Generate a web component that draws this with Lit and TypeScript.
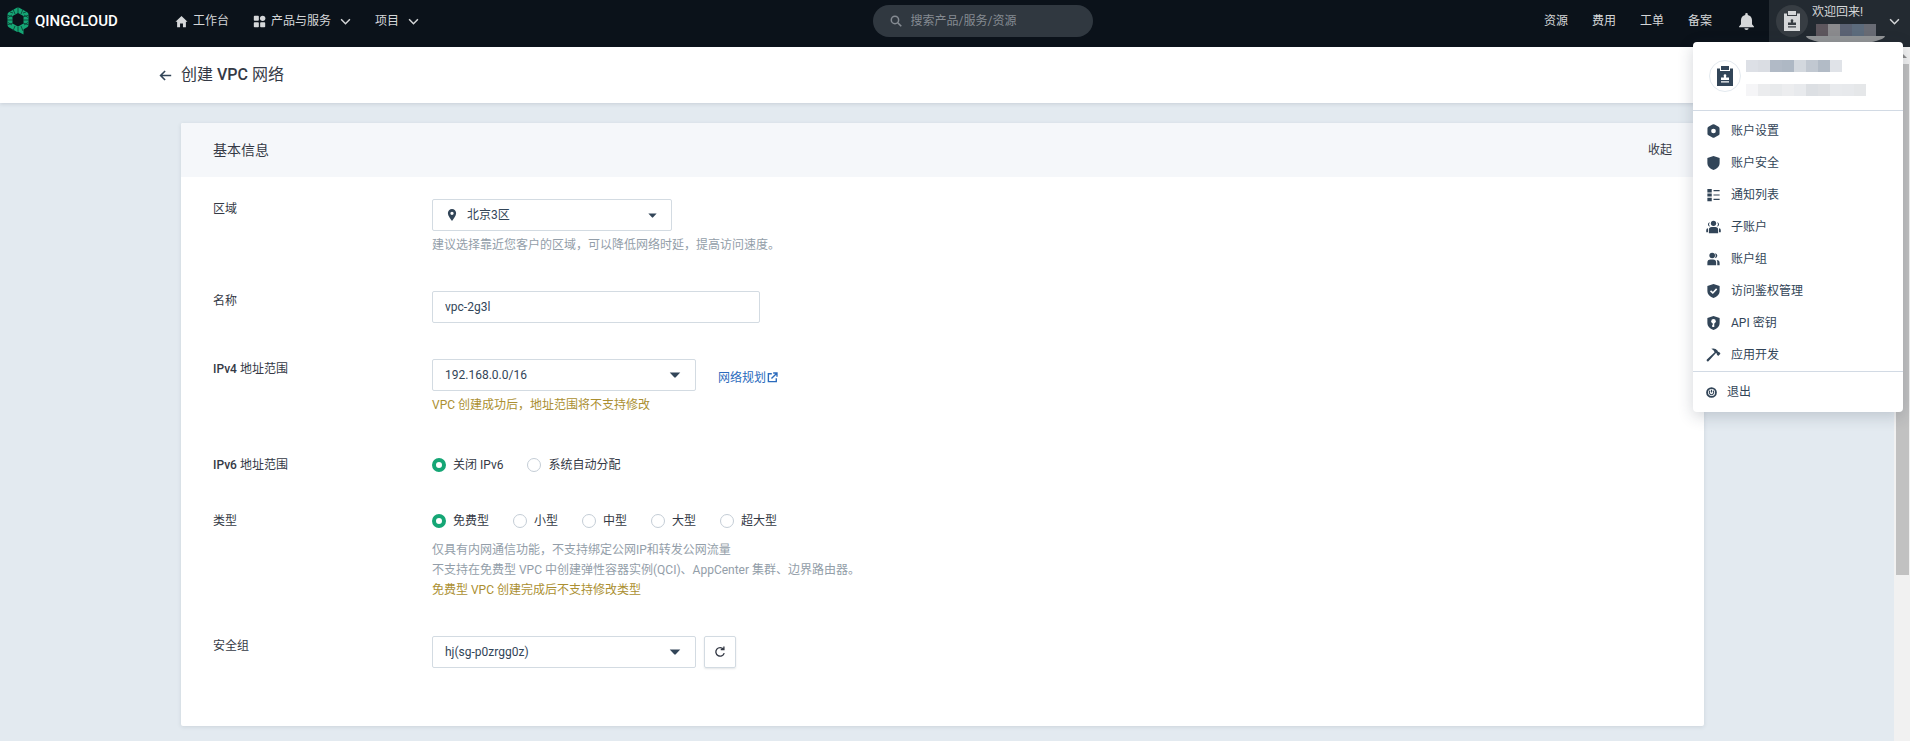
import { LitElement, html, svg, css, SVGTemplateResult } from "lit";
import { customElement, property, state } from "lit/decorators.js";

const icons: Record<string, SVGTemplateResult> = {
  home: svg`<path d="M8 1.2 15.4 8.2H13.4V15H9.8V10.6H6.2V15H2.6V8.2H.6Z"/>`,
  grid: svg`<rect x="1" y="1" width="6.2" height="6.2" rx="1"/><rect x="1" y="8.8" width="6.2" height="6.2" rx="1"/><rect x="8.8" y="8.8" width="6.2" height="6.2" rx="1"/><circle cx="11.9" cy="4.1" r="3.3"/>`,
  chevron: svg`<path d="M1.6 4.8 8 11.2 14.4 4.8" fill="none" stroke="currentColor" stroke-width="2.2"/>`,
  search: svg`<circle cx="6.6" cy="6.6" r="4.9" fill="none" stroke="currentColor" stroke-width="2"/><path d="M10.3 10.3 15 15" fill="none" stroke="currentColor" stroke-width="2.2"/>`,
  bell: svg`<path d="M8 0a1.2 1.2 0 0 1 1.2 1.3v.5C11.700 2.300 13.200 4.300 13.200 6.800V10.500L15 12.600V13.400H1V12.600L2.800 10.500V6.800C2.800 4.300 4.300 2.300 6.800 1.800V1.300A1.200 1.200 0 0 1 8 0ZM6 14.300H10A2 1.700 0 0 1 6 14.300Z"/>`,
  badge: svg`<path d="M0 2.500H3V5H13V2.500H16V20H0ZM4 0H12V4H4ZM7 8.500A1.900 1.900 0 0 1 9 8.500C9.800 9.500 8.900 10.600 9 11.500H12V14H4V11.500H7C7.100 10.600 6.200 9.500 7 8.500ZM4 15.200V16.400H12V15.200Z" fill-rule="evenodd"/>`,
  back: svg`<path d="M15 8H2M7.500 2.500 2 8 7.500 13.500" fill="none" stroke="currentColor" stroke-width="2"/>`,
  pin: svg`<path d="M8 0A5.500 5.500 0 0 1 13.500 5.700C13.500 9.500 10 13 8 16 6 13 2.500 9.500 2.500 5.700A5.500 5.500 0 0 1 8 0ZM8 3.500A2.200 2.200 0 1 0 8 7.900 2.200 2.200 0 0 0 8 3.500Z" fill-rule="evenodd"/>`,
  caret: svg`<path d="M2 5H14L8.900 10.700Q8 11.500 7.100 10.700Z"/>`,
  external: svg`<path d="M7 2.500H2V14H13.500V9M9 1.500H14.500V7M14.300 1.700 6.500 9.500" fill="none" stroke="currentColor" stroke-width="2"/>`,
  refresh: svg`<path d="M12.600 4.200A5.700 5.700 0 1 0 13.600 9.500M9 4.600H13.200V.6" fill="none" stroke="currentColor" stroke-width="1.800"/>`,
  settings: svg`<path d="M8 .3Q8.600.3 9.200.7L13.800 3.200Q14.900 3.800 14.900 5V11Q14.900 12.200 13.800 12.800L9.200 15.300Q8 16 6.800 15.300L2.200 12.800Q1.100 12.200 1.100 11V5Q1.100 3.800 2.200 3.200L6.800.7Q7.400.3 8 .3ZM8 5.300A2.700 2.700 0 1 0 8 10.700 2.700 2.700 0 0 0 8 5.300Z" fill-rule="evenodd"/>`,
  shield: svg`<path d="M8 0 15 2.300V8C15 12 11.500 14.800 8 16 4.500 14.800 1 12 1 8V2.300Z"/>`,
  list: svg`<path d="M1 1H6V5H1ZM1 6.200H6V9.800H1ZM1 11H6V15H1ZM8 2.200H15V3.600H8ZM8 7.300H15V8.700H8ZM8 12.400H15V13.800H8Z"/>`,
  team: svg`<circle cx="8" cy="3.800" r="3"/><path d="M2.700 15V11Q2.700 8 6 8H10Q13.300 8 13.300 11V15ZM1.700 9.500V14H-.3V11.500Q-.3 9.800 1.700 9.500ZM14.300 9.500V14H16.300V11.500Q16.300 9.800 14.300 9.500Z"/><path d="M4 2.500A3.500 3.500 0 0 0 4.300 7.500 2.300 2.300 0 1 1 4 2.500ZM12 2.500A3.500 3.500 0 0 1 11.700 7.500 2.300 2.300 0 1 0 12 2.500Z"/>`,
  group: svg`<circle cx="6.500" cy="4" r="3.200"/><path d="M1 15V12Q1 8.500 4.500 8.500H7.500Q11 8.500 11 12V15ZM9.500 1.500Q12.500 2 12.300 4.600 12 7 9.500 7.200 11.500 4.500 9.500 1.500ZM12.300 15V11.500Q12.300 10 11.500 9.200 15 9.300 15 12.500V15Z"/>`,
  check: svg`<path d="M8 0 15 2.300V8C15 12 11.500 14.800 8 16 4.500 14.800 1 12 1 8V2.300Z"/><path d="M4.600 7.800 7.200 10.200 11.600 5.600" fill="none" stroke="#fff" stroke-width="1.800"/>`,
  key: svg`<path d="M8 0 15 2.300V8C15 12 11.500 14.800 8 16 4.500 14.800 1 12 1 8V2.300Z"/><circle cx="8" cy="6" r="2.600" fill="#fff"/><path d="M7.100 8H8.900V12.500H7.100Z" fill="#fff"/><path d="M6.600 10.200H8V12.500H6.600Z" fill="#fff"/>`,
  hammer: svg`<path d="M5.500.8Q10-.3 12.500 2.800L13.300 4.600 14.300 4.200 16 6.600 13.300 9 11.800 7.500 11.800 6.200 10.800 5.800 2.200 15.200Q1 15.700.4 14.900-.2 14 .4 13.200L9.300 4.800Q8.500 2 5.500.8Z"/>`,
  power: svg`<circle cx="8" cy="8" r="6.500" fill="none" stroke="currentColor" stroke-width="2.600"/><path d="M6 5.500A3.200 3.200 0 1 0 10 5.500M8 4V8" fill="none" stroke="currentColor" stroke-width="1.600"/>`,
};

@customElement("app-icon")
class AppIcon extends LitElement {
  @property() name = "";
  static styles = css`
    :host { display: inline-flex; flex: none; width: 12px; height: 12px; }
    svg { width: 100%; height: 100%; fill: currentColor; overflow: visible; }
  `;
  render() {
    const box = this.name === "badge" ? "0 0 16 20" : "0 0 16 16";
    return html`<svg viewBox=${box} aria-hidden="true">${icons[this.name]}</svg>`;
  }
}

@customElement("app-logo")
class AppLogo extends LitElement {
  static styles = css`
    :host { display: flex; align-items: center; gap: 6px; }
    svg { width: 22px; height: 28px; }
    .word {
      color: #fff;
      font: 500 15px/28px Roboto, sans-serif;
    }
  `;
  render() {
    return html`
      <svg viewBox="0 0 22 28" aria-hidden="true">
        <path d="M11 3 19 7.500V18L11 22.500 3 18V7.500Z" fill="none" stroke="#15a675" stroke-width="5" stroke-linejoin="round"/>
        <path d="M10 21 16.500 20V27.500L10 24Z" fill="#15a675"/>
        <path d="M11 0V6M6 2 8 7M16 2 14 7M0 8 6 10M22 8 16 10M0 13H6M22 13H16M0 18 6 16M22 18 16 16M6 24 8 19M11 25V20M16 24 14 19M3 5 6 6M16 6 19 5M1 10.500 5 8M21 10.500 17 8M1 15.500 5 18M21 15.500 17 18" stroke="#0b3a31" stroke-width=".8"/>
      </svg>
      <span class="word">QINGCLOUD</span>
    `;
  }
}

/* Masked account text, shown as rows of plain blocks. */
@customElement("masked-text")
class MaskedText extends LitElement {
  @property({ attribute: false }) colors: string[] = [];
  static styles = css`
    :host { display: flex; height: 12px; }
    .cell { width: 12px; height: 12px; }
  `;
  render() {
    return html`${this.colors.map((c) => html`<span class="cell" style="background:${c}"></span>`)}`;
  }
}

const menuItems = [
  ["settings", "账户设置"],
  ["shield", "账户安全"],
  ["list", "通知列表"],
  ["team", "子账户"],
  ["group", "账户组"],
  ["check", "访问鉴权管理"],
  ["key", "API 密钥"],
  ["hammer", "应用开发"],
];

@customElement("account-menu")
class AccountMenu extends LitElement {
  static styles = css`
    :host {
      display: block;
      width: 210px;
      background: #fff;
      border-radius: 4px;
      box-shadow: 0 4px 16px rgba(36, 46, 66, 0.2);
      color: #324558;
      font-size: 12px;
      line-height: 20px;
    }
    .profile { display: flex; gap: 5px; padding: 18px 16px; border-bottom: 1px solid #d2dae4; }
    .avatar {
      display: flex; align-items: center; justify-content: center;
      box-sizing: border-box; width: 32px; height: 32px;
      border: 1px solid #e3e9ef; border-radius: 50%;
    }
    .avatar app-icon { width: 16px; height: 20px; }
    .masked { display: flex; flex-direction: column; gap: 12px; height: 32px; }
    ul { margin: 0; padding: 4px 0 0; list-style: none; }
    a { display: flex; align-items: center; gap: 10px; height: 32px; padding: 0 13px; color: inherit; text-decoration: none; }
    a app-icon { width: 15px; height: 14px; }
    .logout { height: 40px; border-top: 1px solid #d2dae4; }
    .logout app-icon { width: 11px; height: 11px; }
  `;
  render() {
    return html`
      <div class="profile">
        <span class="avatar"><app-icon name="badge"></app-icon></span>
        <div class="masked">
          <masked-text .colors=${["#dde0e6", "#dadde3", "#b1bac6", "#aeb8c4", "#d3d8de", "#c1c8d1", "#b2bbc6", "#e0e3e8"]}></masked-text>
          <masked-text .colors=${["#f5f5f7", "#ebecee", "#e8eaec", "#ecedef", "#e8eaed", "#dcdfe3", "#dfe1e4", "#e8eaed", "#e7e9ec", "#e5e7e9"]}></masked-text>
        </div>
      </div>
      <ul>
        ${menuItems.map(([icon, text]) => html`<li><a href="#"><app-icon name=${icon}></app-icon>${text}</a></li>`)}
      </ul>
      <a class="logout" href="#"><app-icon name="power"></app-icon>退出</a>
    `;
  }
}

@customElement("app-header")
class AppHeader extends LitElement {
  static styles = css`
    :host {
      display: grid;
      grid-template-columns: 18fr 220px 17fr;
      align-items: start;
      height: 47px;
      padding-left: 7px;
      background: #0b121a;
      color: #d5d7d9;
      font-size: 12px;
      line-height: 20px;
    }
    a, button { color: inherit; font: inherit; text-decoration: none; background: none; border: 0; padding: 0; }
    .left { display: flex; align-items: center; height: 42px; }
    .left app-logo { width: 168px; flex: none; }
    nav { display: flex; align-items: center; gap: 24px; }
    .item { display: flex; align-items: center; gap: 5px; }
    .item app-icon { width: 13px; height: 13px; }
    .item .arrow { margin-left: 4px; width: 11px; height: 11px; }
    .search {
      display: flex; align-items: center; gap: 9px;
      height: 32px; padding: 0 17px; margin-top: 5px;
      border-radius: 16px; background: #303840; color: #858b92;
    }
    .search input { flex: 1; min-width: 0; border: 0; padding: 0; background: none; outline: 0; color: #fff; font: inherit; }
    .search input::placeholder { color: #858b92; }
    .right { display: flex; align-items: center; justify-content: flex-end; height: 47px; }
    .links { display: flex; align-items: center; gap: 24px; padding-bottom: 5px; }
    .bell { display: flex; margin-right: 14px; margin-left: 2px; }
    .bell app-icon { width: 17px; height: 19px; }
    .user {
      display: flex; align-items: flex-start; gap: 4px;
      box-sizing: border-box; width: 141px; height: 47px; padding: 5px 14px 0 7px;
      background: #232a31;
    }
    .avatar {
      display: flex; align-items: center; justify-content: center; flex: none;
      width: 32px; height: 32px; border-radius: 50%; background: #373d43;
    }
    .avatar app-icon { width: 16px; height: 20px; }
    .name { flex: 1; display: flex; flex-direction: column; margin-top: -3px; text-align: left; }
    .name masked-text { margin: 2px 0 0 4px; }
    .user .arrow { width: 11px; height: 11px; margin-top: 11px; }
    .tail { width: 79px; height: 8px; margin-left: -6px; border-radius: 0 0 40px 40px / 0 0 8px 8px; background: #929496; }
  `;
  render() {
    return html`
      <div class="left">
        <app-logo></app-logo>
        <nav>
          <a class="item" href="#"><app-icon name="home"></app-icon>工作台</a>
          <button class="item"><app-icon name="grid"></app-icon>产品与服务<app-icon class="arrow" name="chevron"></app-icon></button>
          <button class="item">项目<app-icon class="arrow" name="chevron"></app-icon></button>
        </nav>
      </div>
      <label class="search">
        <app-icon name="search"></app-icon>
        <input type="text" aria-label="搜索" placeholder="搜索产品/服务/资源">
      </label>
      <div class="right">
        <div class="links">
          <a href="#">资源</a><a href="#">费用</a><a href="#">工单</a><a href="#">备案</a>
          <button class="bell" aria-label="通知"><app-icon name="bell"></app-icon></button>
        </div>
        <button class="user">
          <span class="avatar"><app-icon name="badge"></app-icon></span>
          <span class="name">
            <span>欢迎回来!</span>
            <masked-text .colors=${["#5d565d", "#8a8a8d", "#5b6273", "#5c6b7c", "#686b74"]}></masked-text>
            <span class="tail"></span>
          </span>
          <app-icon class="arrow" name="chevron"></app-icon>
        </button>
      </div>
    `;
  }
}

@customElement("vpc-form")
class VpcForm extends LitElement {
  @state() private ipv6 = "关闭 IPv6";
  @state() private size = "免费型";

  static styles = css`
    :host { display: block; background: #fff; border-radius: 2px; box-shadow: 0 1px 4px rgba(36, 46, 66, 0.12); color: #343945; font-size: 12px; line-height: 20px; }
    .head { display: flex; align-items: center; justify-content: space-between; height: 54px; padding: 0 32px; background: #f5f7fa; border-radius: 2px 2px 0 0; }
    h2 { margin: 0; font-size: 14px; font-weight: 400; }
    button { font: inherit; color: inherit; border: 0; background: none; padding: 0; }
    .body { display: flex; flex-direction: column; gap: 36px; padding: 22px 32px 58px; }
    .row { display: grid; grid-template-columns: 219px 1fr; align-items: start; }
    .latin { font-weight: 500; }
    .line { display: flex; align-items: center; gap: 8px; }
    .select { display: grid; align-items: center; width: 264px; color: #324558; }
    .select.region { width: 240px; }
    .select > * { grid-area: 1 / 1; }
    .select .caret { justify-self: end; margin-right: 14px; width: 14px; height: 14px; pointer-events: none; }
    .select.region .caret { width: 11px; height: 11px; }
    .select .pin { margin-left: 14px; pointer-events: none; }
    select, .text {
      box-sizing: border-box; width: 100%; height: 32px; padding: 0 12px;
      border: 1px solid #d3dbe2; border-radius: 2px; background: #fff;
      color: #324558; font: inherit; appearance: none; outline: 0;
    }
    .region select { padding-left: 34px; }
    .text { width: 328px; }
    .hint { margin: 4px 0 0; color: #939ea9; }
    .warn { color: #ab8f31; }
    .tall { margin-bottom: 4px; }
    .types { margin-top: 9px; }
    .hint p { margin: 0; }
    .plan { display: flex; align-items: center; gap: 1px; margin-left: 14px; padding-top: 5px; color: #2b6bbd; text-decoration: none; }
    .plan app-icon { width: 11px; height: 11px; }
    .radios { display: flex; gap: 24px; }
    .radios label { display: flex; align-items: center; gap: 7px; }
    .radios input { appearance: none; box-sizing: border-box; width: 14px; height: 14px; margin: 0; border: 1px solid #c4cdd6; border-radius: 50%; background: #fff; }
    .radios input:checked { border: 4px solid #15a675; }
    .refresh { display: flex; align-items: center; justify-content: center; box-sizing: border-box; width: 32px; height: 32px; border: 1px solid #d3dbe2; border-radius: 2px; box-shadow: 0 1px 2px rgba(36, 46, 66, 0.12); }
  `;

  private radios(name: string, options: string[], current: string, pick: (v: string) => void) {
    return html`
      <div class="radios" role="radiogroup" aria-labelledby="${name}-label">
        ${options.map((o) => html`
          <label><input type="radio" name=${name} .checked=${o === current} @change=${() => pick(o)}><span>${o}</span></label>
        `)}
      </div>
    `;
  }

  render() {
    return html`
      <div class="head"><h2>基本信息</h2><button>收起</button></div>
      <form class="body">
        <div class="row">
          <label for="region">区域</label>
          <div>
            <div class="select region">
              <select id="region"><option>北京3区</option></select>
              <app-icon class="pin" name="pin"></app-icon>
              <app-icon class="caret" name="caret"></app-icon>
            </div>
            <p class="hint">建议选择靠近您客户的区域，可以降低网络时延，提高访问速度。</p>
          </div>
        </div>
        <div class="row">
          <label for="name">名称</label>
          <input class="text" id="name" type="text" value="vpc-2g3l">
        </div>
        <div class="row tall">
          <label for="ipv4"><span class="latin">IPv4</span> 地址范围</label>
          <div>
            <div class="line">
              <div class="select">
                <select id="ipv4"><option>192.168.0.0/16</option></select>
                <app-icon class="caret" name="caret"></app-icon>
              </div>
              <a class="plan" href="#">网络规划<app-icon name="external"></app-icon></a>
            </div>
            <p class="hint warn">VPC 创建成功后，地址范围将不支持修改</p>
          </div>
        </div>
        <div class="row">
          <span id="ipv6-label"><span class="latin">IPv6</span> 地址范围</span>
          ${this.radios("ipv6", ["关闭 IPv6", "系统自动分配"], this.ipv6, (v) => (this.ipv6 = v))}
        </div>
        <div class="row">
          <span id="type-label">类型</span>
          <div>
            ${this.radios("type", ["免费型", "小型", "中型", "大型", "超大型"], this.size, (v) => (this.size = v))}
            <div class="hint types">
              <p>仅具有内网通信功能，不支持绑定公网IP和转发公网流量</p>
              <p>不支持在免费型 VPC 中创建弹性容器实例(QCI)、AppCenter 集群、边界路由器。</p>
              <p class="warn">免费型 VPC 创建完成后不支持修改类型</p>
            </div>
          </div>
        </div>
        <div class="row">
          <label for="sg">安全组</label>
          <div class="line">
            <div class="select">
              <select id="sg"><option>hj(sg-p0zrgg0z)</option></select>
              <app-icon class="caret" name="caret"></app-icon>
            </div>
            <button class="refresh" type="button" aria-label="刷新"><app-icon name="refresh"></app-icon></button>
          </div>
        </div>
      </form>
    `;
  }
}

@customElement("app-root")
class AppRoot extends LitElement {
  static styles = css`
    :host {
      display: flex; flex-direction: column; min-height: 100vh; position: relative;
      background: #e3eaf0;
      font-family: Roboto, "Noto Sans CJK SC", sans-serif;
    }
    .page { flex: 1; display: flex; }
    .content { flex: 1; min-width: 0; }
    .title { display: flex; align-items: center; gap: 9px; height: 56px; padding-left: 159px; background: #fff; box-shadow: 0 1px 4px rgba(36, 46, 66, 0.14); color: #324558; }
    .title a { display: flex; color: inherit; }
    .title app-icon { width: 13px; height: 13px; }
    h1 { margin: 0; font-size: 16px; line-height: 24px; font-weight: 400; color: #343945; }
    .latin { font-weight: 500; }
    main { padding: 20px 190px 14px 181px; }
    .scroll { display: flex; flex-direction: column; box-sizing: border-box; width: 16px; padding: 0 1px 0 2px; background: #f1f1f1; }
    .up { display: flex; align-items: center; justify-content: center; height: 17px; color: #8b8b8b; }
    .up::before { content: ""; border: 4px solid transparent; border-top: 0; border-bottom-color: currentColor; }
    .thumb { flex: 511; background: #c1c1c1; }
    .rest { flex: 166; }
    account-menu { position: absolute; top: 42px; right: 7px; z-index: 2; }
  `;
  render() {
    return html`
      <app-header></app-header>
      <account-menu></account-menu>
      <div class="page">
        <div class="content">
          <div class="title">
            <a href="#" aria-label="返回"><app-icon name="back"></app-icon></a>
            <h1>创建 <span class="latin">VPC</span> 网络</h1>
          </div>
          <main><vpc-form></vpc-form></main>
        </div>
        <div class="scroll" aria-hidden="true"><div class="up"></div><div class="thumb"></div><div class="rest"></div></div>
      </div>
    `;
  }
}
